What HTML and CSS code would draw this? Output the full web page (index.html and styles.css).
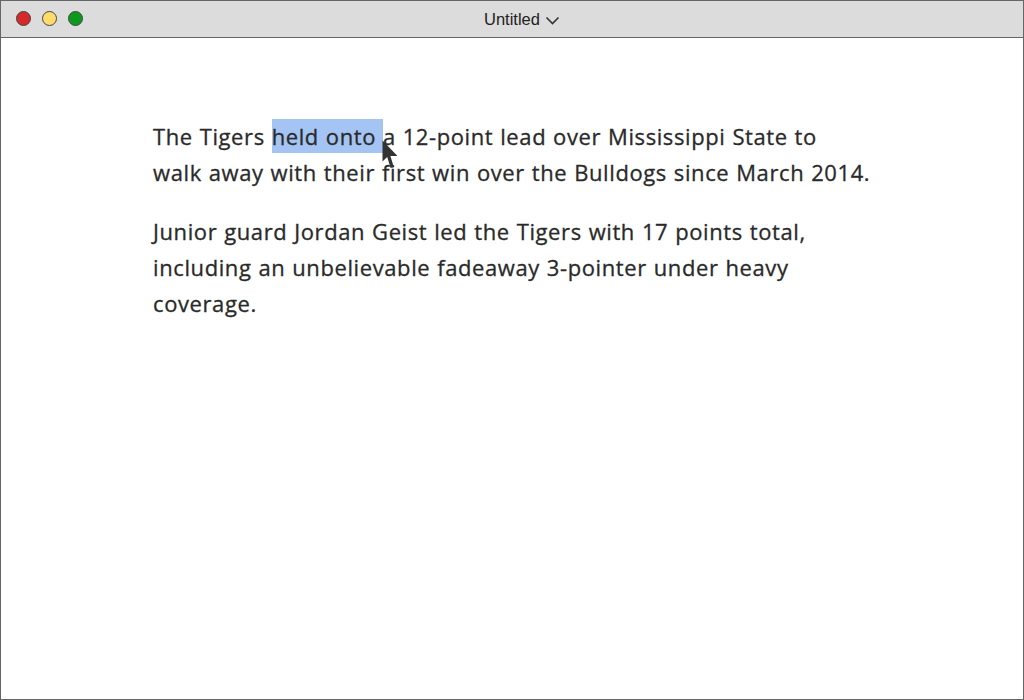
FILE: index.html
```html
<!DOCTYPE html>
<html>
<head>
<meta charset="utf-8">
<link rel="stylesheet" href="styles.css">
</head>
<body>
<div class="window">
  <div class="titlebar">
    <div class="lights">
      <span class="light red"></span>
      <span class="light yellow"></span>
      <span class="light green"></span>
    </div>
    <div class="title">Untitled
      <svg class="chev" width="15" height="9" viewBox="0 0 15 9"><path d="M1.5 1.5 L7.5 7.5 L13.5 1.5" fill="none" stroke="#333" stroke-width="1.6"/></svg>
    </div>
  </div>
  <div class="content">
    <p class="para">The Tigers <span class="sel">held onto </span><span class="cursorwrap">a<svg class="cursor" width="17" height="30" viewBox="0 0 17 30"><path d="M0.5 0.5 L0.5 21.5 L5.2 17 L8.6 28 L11.8 27 L8.4 16 L15.5 16 Z" fill="#333"/></svg></span> 12-point lead over Mississippi State to<br>walk away with their first win over the Bulldogs since March 2014.</p>
    <p class="para">Junior guard Jordan Geist led the Tigers with 17 points total,<br>including an unbelievable fadeaway 3-pointer under heavy<br>coverage.</p>
  </div>
</div>
</body>
</html>
```
FILE: styles.css
```css
html, body {
  margin: 0;
  padding: 0;
  background: #fff;
}
.window {
  width: 1024px;
  height: 700px;
  box-sizing: border-box;
  border: 1px solid #666;
  display: flex;
  flex-direction: column;
  overflow: hidden;
}
.titlebar {
  height: 36px;
  background: #dcdcdc;
  border-bottom: 1px solid #666;
  position: relative;
  display: flex;
  align-items: center;
  justify-content: center;
  flex-shrink: 0;
}
.lights {
  position: absolute;
  left: 15px;
  top: 10px;
  display: flex;
  gap: 11px;
}
.light {
  width: 15px;
  height: 15px;
  border-radius: 50%;
  box-sizing: border-box;
  border: 1px solid #444;
}
.red { background: #d42a2a; }
.yellow { background: #fedb6b; }
.green { background: #0c9a1c; }
.title {
  font-family: "Liberation Sans", Arial, sans-serif;
  font-size: 16.5px;
  color: #222;
  display: flex;
  align-items: center;
  gap: 5px;
  margin-left: 20px;
  margin-top: 1px;
}
.chev { margin-top: 2px; }
.content {
  padding: 80px 0 0 152px;
}
.para {
  margin: 0 0 23px 0;
  font-family: "Open Sans", sans-serif;
  font-size: 22px;
  line-height: 36px;
  color: #2a2a2a;
  letter-spacing: 0.6px;
  word-spacing: 0.6px;
  white-space: nowrap;
  -webkit-text-stroke: 0.3px #2a2a2a;
}
.sel {
  background: #a4c4f4;
  padding: 2px 0;
}
.cursorwrap {
  position: relative;
}
.cursor {
  position: absolute;
  left: -1px;
  top: 19px;
}
```
